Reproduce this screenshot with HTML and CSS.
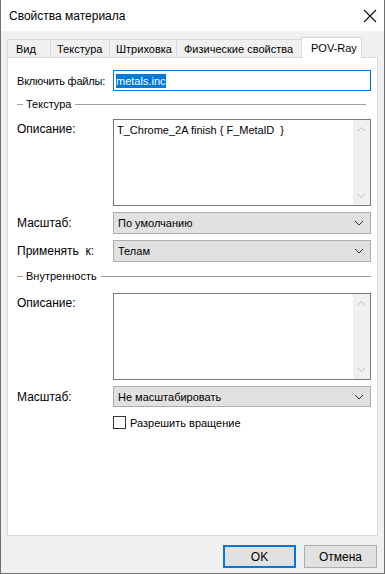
FILE: index.html
```html
<!DOCTYPE html>
<html lang="ru">
<head>
  <meta charset="UTF-8">
  <title>Свойства материала</title>
  <link rel="stylesheet" href="styles.css">
</head>
<body>
  <div class="window">
    <div class="titlebar">
      <span class="title">Свойства материала</span>
      <svg class="close" width="14" height="14" viewBox="0 0 14 14">
        <path d="M1 1 L13 13 M13 1 L1 13" stroke="#111" stroke-width="1.1" fill="none"/>
      </svg>
    </div>

    <div class="client">
      <div class="tabs">
        <div class="tab">Вид</div>
        <div class="tab">Текстура</div>
        <div class="tab">Штриховка</div>
        <div class="tab">Физические свойства</div>
        <div class="tab active">POV-Ray</div>
      </div>

      <div class="panel">
        <div class="row row-include">
          <div class="label label-narrow">Включить файлы:</div>
          <div class="field input focused"><span class="selected">metals.inc</span></div>
        </div>

        <div class="group group-first">
          <span class="dash"></span>
          <span class="group-title">Текстура</span>
          <span class="rule"></span>
        </div>

        <div class="row row-memo">
          <div class="label">Описание:</div>
          <div class="field memo">
            <div class="memo-text">T_Chrome_2A finish { F_MetalD &nbsp;}</div>
            <div class="scrollbar">
              <svg width="9" height="6" viewBox="0 0 9 6"><path d="M1 5 L4.5 1.5 L8 5" stroke="#bdbdbd" fill="none"/></svg>
              <svg width="9" height="6" viewBox="0 0 9 6"><path d="M1 1 L4.5 4.5 L8 1" stroke="#bdbdbd" fill="none"/></svg>
            </div>
          </div>
        </div>

        <div class="row row-select">
          <div class="label">Масштаб:</div>
          <div class="field select">
            <span>По умолчанию</span>
            <svg width="10" height="6" viewBox="0 0 10 6"><path d="M1 1 L5 5 L9 1" stroke="#333" fill="none"/></svg>
          </div>
        </div>

        <div class="row row-select">
          <div class="label">Применять&nbsp; к:</div>
          <div class="field select">
            <span>Телам</span>
            <svg width="10" height="6" viewBox="0 0 10 6"><path d="M1 1 L5 5 L9 1" stroke="#333" fill="none"/></svg>
          </div>
        </div>

        <div class="group group-second">
          <span class="dash"></span>
          <span class="group-title">Внутренность</span>
          <span class="rule"></span>
        </div>

        <div class="row row-memo2">
          <div class="label">Описание:</div>
          <div class="field memo">
            <div class="memo-text"></div>
            <div class="scrollbar">
              <svg width="9" height="6" viewBox="0 0 9 6"><path d="M1 5 L4.5 1.5 L8 5" stroke="#bdbdbd" fill="none"/></svg>
              <svg width="9" height="6" viewBox="0 0 9 6"><path d="M1 1 L4.5 4.5 L8 1" stroke="#bdbdbd" fill="none"/></svg>
            </div>
          </div>
        </div>

        <div class="row row-select row-scale2">
          <div class="label">Масштаб:</div>
          <div class="field select">
            <span>Не масштабировать</span>
            <svg width="10" height="6" viewBox="0 0 10 6"><path d="M1 1 L5 5 L9 1" stroke="#333" fill="none"/></svg>
          </div>
        </div>

        <div class="row row-check">
          <div class="label"></div>
          <label class="check"><span class="box"></span>Разрешить вращение</label>
        </div>
      </div>

      <div class="actions">
        <button class="btn default">OK</button>
        <button class="btn">Отмена</button>
      </div>
    </div>
  </div>
</body>
</html>
```

FILE: styles.css
```css
body {
  margin: 0;
  font-family: "Liberation Sans", Arial, sans-serif;
  font-size: 11px;
  color: #000;
}

.window {
  width: 385px;
  height: 574px;
  box-sizing: border-box;
  border: 1px solid #6f6f6f;
  border-top: none;
  display: flex;
  flex-direction: column;
  background: #f0f0f0;
}

.titlebar {
  height: 31px;
  background: #fff;
  display: flex;
  align-items: center;
  justify-content: space-between;
  padding: 0 7px 0 8px;
}

.title {
  font-size: 12px;
}

.client {
  flex: 1;
  display: flex;
  flex-direction: column;
  padding: 0 6px 0 6px;
}

.tabs {
  display: flex;
  margin-top: 8px;
  height: 18px;
  align-items: flex-end;
  position: relative;
  z-index: 1;
}

.tab {
  height: 18px;
  box-sizing: border-box;
  border: 1px solid #d9d9d9;
  border-bottom: none;
  margin-right: -1px;
  display: flex;
  align-items: center;
  padding-top: 1px;
  background: #f0f0f0;
  white-space: nowrap;
}

.tab:nth-child(1) { width: 44px; padding-left: 8px; }
.tab:nth-child(2) { width: 60px; padding-left: 6px; }
.tab:nth-child(3) { width: 68px; padding-left: 6px; }
.tab:nth-child(4) { width: 126px; padding-left: 7px; }

.tab.active {
  width: 61px;
  height: 21px;
  margin-bottom: -1px;
  background: #fff;
  padding-left: 9px;
  padding-bottom: 2px;
}

.panel {
  width: 371px;
  height: 479px;
  box-sizing: border-box;
  border: 1px solid #d9d9d9;
  background: #fff;
  padding: 12px 5px 0 9px;
}

.row {
  display: grid;
  grid-template-columns: 96px 258px;
  align-items: center;
}

.row-memo { margin-top: 8px; align-items: start; }
.row-memo2 { margin-top: 10px; align-items: start; }
.row-memo .label, .row-memo2 .label { padding-top: 3px; }
.row-select { margin-top: 6px; }
.row-check { margin-top: 9px; }

.field {
  box-sizing: border-box;
  height: 22px;
}

.input {
  height: 21px;
  border: 1px solid #0078d7;
  display: flex;
  align-items: center;
  padding-left: 2px;
}

.selected {
  background: #0078d7;
  color: #fff;
  line-height: 14px;
}

.group {
  display: flex;
  align-items: center;
  height: 14px;
}

.group-first { margin-top: 6px; }
.group-second { margin-top: 7px; }

.dash {
  width: 6px;
  border-top: 1px solid #a0a0a0;
}

.group-title {
  padding: 0 4px 0 3px;
}

.rule {
  width: 291px;
  border-top: 1px solid #a0a0a0;
}

.group-second .rule { width: 270px; }

.memo {
  height: 87px;
  border: 1px solid #7a7a7a;
  display: flex;
}

.memo-text {
  flex: 1;
  padding: 4px 0 0 3px;
}

.scrollbar {
  width: 17px;
  background: #f0f0f0;
  display: flex;
  flex-direction: column;
  align-items: center;
  justify-content: space-between;
  padding: 6px 0 6px;
}

.select {
  background: #e1e1e1;
  border: 1px solid #adadad;
  display: flex;
  align-items: center;
  justify-content: space-between;
  padding: 0 6px 0 4px;
}

.row-scale2 .select { height: 21px; }

.check {
  display: flex;
  align-items: center;
  gap: 4px;
}

.box {
  width: 13px;
  height: 13px;
  box-sizing: border-box;
  border: 1px solid #333;
  background: #fff;
}

.label {
  font-size: 12px;
  white-space: nowrap;
}

.label-narrow {
  font-size: 11px;
  letter-spacing: -0.2px;
}

.actions {
  display: flex;
  justify-content: flex-end;
  gap: 8px;
  margin-top: 9px;
  padding-right: 1px;
}

.btn {
  width: 73px;
  height: 23px;
  box-sizing: border-box;
  background: #e1e1e1;
  border: 1px solid #adadad;
  font-family: "Liberation Sans", Arial, sans-serif;
  font-size: 12px;
  padding: 0;
}

.btn.default {
  border: 2px solid #0078d7;
}
```
